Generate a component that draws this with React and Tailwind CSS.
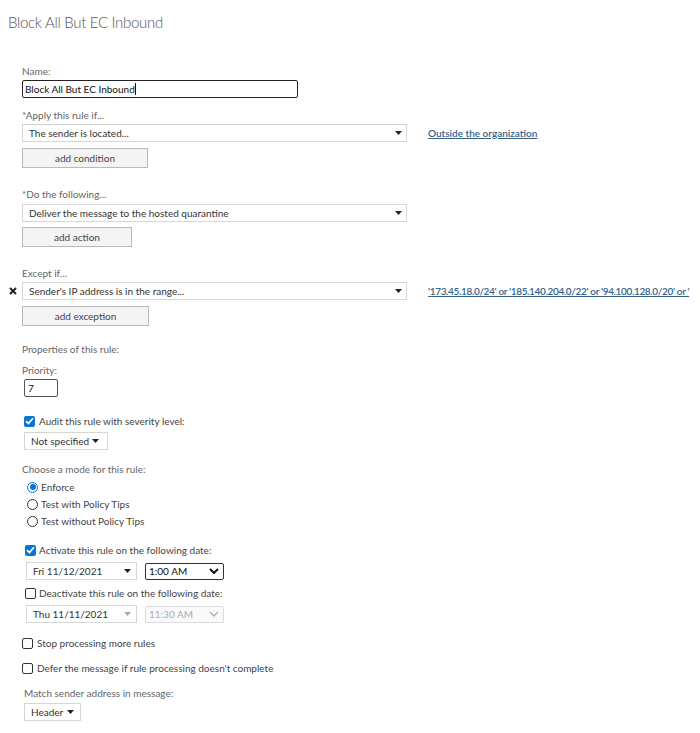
import React from "react";

const Tri = ({ color = "#222" }) => (
  <svg width="7" height="4" viewBox="0 0 7 4" className="shrink-0"><path d="M0 0H7L3.5 4Z" fill={color} /></svg>
);
const Chev = ({ color = "#111", w = 2 }) => (
  <svg width="10" height="6" viewBox="0 0 10 6" className="shrink-0"><path d="M1 1L5 5L9 1" fill="none" stroke={color} strokeWidth={w} /></svg>
);

const Label = ({ children, cls = "" }) => (
  <div className={"h-[14px] leading-[14px] text-[#666] whitespace-nowrap " + cls}>{children}</div>
);

const Check = ({ checked }) =>
  checked ? (
    <span className="w-[11px] h-[11px] rounded-[2px] bg-[#0a74d6] flex items-center justify-center shrink-0">
      <svg width="9" height="8" viewBox="0 0 9 8"><path d="M1 4.2L3.4 6.5L8 1.3" fill="none" stroke="#fff" strokeWidth="1.7" /></svg>
    </span>
  ) : (
    <span className="w-[11px] h-[11px] rounded-[2px] border border-[#333] bg-white shrink-0" />
  );

const Radio = ({ checked }) =>
  checked ? (
    <span className="w-[11px] h-[11px] rounded-full border-[1.5px] border-[#0a74d6] flex items-center justify-center shrink-0">
      <span className="w-[6px] h-[6px] rounded-full bg-[#0a74d6]" />
    </span>
  ) : (
    <span className="w-[11px] h-[11px] rounded-full border border-[#333] bg-white shrink-0" />
  );

export default function App() {
  return (
    <div className="w-[700px] h-[733px] bg-white overflow-hidden font-['Lato',sans-serif] text-[10px] text-[#333] whitespace-nowrap">
      <div className="pt-[12px] pl-[8px] h-[32px] leading-[20px] text-[15px] tracking-[-0.3px] font-light text-[#555]">
        Block All But EC Inbound
      </div>

      <div className="pl-[22px]">
        <Label cls="mt-[32px]">Name:</Label>
        <div className="mt-[2px] w-[276px] h-[18px] border-[1.5px] border-[#222] rounded-[2px] flex items-center pl-[2px] text-[#111]">
          Block All But EC Inbound<span className="w-px h-[12px] bg-[#111]" />
        </div>

        <Label cls="mt-[10px]">*Apply this rule if...</Label>
        <div className="mt-[2px] flex items-center">
          <div className="w-[385px] shrink-0 h-[18px] border border-[#d6d6d6] border-t-[#cfcfcf] bg-white flex items-center justify-between pl-[6px] pr-[4px]">
            <span>The sender is located...</span>
            <Tri />
          </div>
          <a className="ml-[21px] underline text-[#35638a] font-semibold">Outside the organization</a>
        </div>
        <div className="mt-[6px] w-[126px] h-[20px] border border-[#b9b9b9] bg-[#f4f4f4] flex items-center justify-center text-[#444]">
          add condition
        </div>

        <Label cls="mt-[19px]">*Do the following...</Label>
        <div className="mt-[3px] w-[385px] h-[18px] border border-[#d6d6d6] bg-white flex items-center justify-between pl-[6px] pr-[4px]">
          <span>Deliver the message to the hosted quarantine</span>
          <Tri />
        </div>
        <div className="mt-[5px] w-[110px] h-[20px] border border-[#b9b9b9] bg-[#f4f4f4] flex items-center justify-center text-[#444]">
          add action
        </div>

        <Label cls="mt-[19px]">Except if...</Label>
        <div className="mt-[2px] flex items-center -ml-[13px]">
          <span className="w-[13px] shrink-0 flex items-center">
            <svg width="8" height="8" viewBox="0 0 8 8"><path d="M1 1L7 7M7 1L1 7" stroke="#222" strokeWidth="2" /></svg>
          </span>
          <div className="w-[385px] shrink-0 h-[18px] border border-[#d6d6d6] bg-white flex items-center justify-between pl-[6px] pr-[4px]">
            <span>Sender's IP address is in the range...</span>
            <Tri />
          </div>
          <a className="ml-[21px] shrink-0 underline text-[#35638a] font-semibold tracking-[-0.35px]">
            '173.45.18.0/24' or '185.140.204.0/22' or '94.100.128.0/20' or '
          </a>
        </div>
        <div className="mt-[6px] w-[127px] h-[20px] border border-[#b9b9b9] bg-[#f4f4f4] flex items-center justify-center text-[#444]">
          add exception
        </div>

        <Label cls="mt-[16px]">Properties of this rule:</Label>
        <Label cls="mt-[7px]">Priority:</Label>
        <div className="mt-[2px] ml-[2px] w-[34px] h-[18px] border border-[#555] rounded-[2px] flex items-center pl-[3px] text-[#111]">
          7
        </div>

        <div className="mt-[17px] ml-[2px] h-[14px] flex items-center gap-[4px] text-[#444]">
          <Check checked />
          <span>Audit this rule with severity level:</span>
        </div>
        <div className="mt-[4px] ml-[2px] w-[84px] h-[18px] border border-[#d6d6d6] bg-white flex items-center justify-between pl-[6px] pr-[8px]">
          <span>Not specified</span>
          <Tri />
        </div>

        <Label cls="mt-[12px]">Choose a mode for this rule:</Label>
        <div className="mt-[4px] ml-[5px] h-[14px] flex items-center gap-[3px] text-[#444]">
          <Radio checked />
          <span>Enforce</span>
        </div>
        <div className="mt-[3px] ml-[5px] h-[14px] flex items-center gap-[3px] text-[#444]">
          <Radio />
          <span>Test with Policy Tips</span>
        </div>
        <div className="mt-[3px] ml-[5px] h-[14px] flex items-center gap-[3px] text-[#444]">
          <Radio />
          <span>Test without Policy Tips</span>
        </div>

        <div className="mt-[15px] ml-[3px] h-[14px] flex items-center gap-[3px] text-[#444]">
          <Check checked />
          <span>Activate this rule on the following date:</span>
        </div>
        <div className="mt-[5px] ml-[4px] flex items-center gap-[8px]">
          <div className="w-[111px] h-[18px] border border-[#d6d6d6] bg-white flex items-center justify-between pl-[6px] pr-[5px]">
            <span>Fri 11/12/2021</span>
            <Tri />
          </div>
          <div className="w-[79px] h-[17px] border border-[#333] rounded-[2px] bg-white flex items-center justify-between pl-[3px] pr-[4px] text-[#111]">
            <span>1:00 AM</span>
            <Chev />
          </div>
        </div>

        <div className="mt-[6px] ml-[3px] h-[14px] flex items-center gap-[3px] text-[#444]">
          <Check />
          <span>Deactivate this rule on the following date:</span>
        </div>
        <div className="mt-[5px] ml-[4px] flex items-center gap-[8px]">
          <div className="w-[111px] h-[18px] border border-[#d6d6d6] bg-white flex items-center justify-between pl-[6px] pr-[5px]">
            <span>Thu 11/11/2021</span>
            <Tri color="#aaa" />
          </div>
          <div className="w-[79px] h-[17px] border border-[#dcdcdc] rounded-[2px] bg-[#fafafa] flex items-center justify-between pl-[3px] pr-[4px] text-[#aaa]">
            <span>11:30 AM</span>
            <Chev color="#b0b0b0" w={1.4} />
          </div>
        </div>

        <div className="mt-[13px] h-[14px] flex items-center gap-[4px] text-[#444]">
          <Check />
          <span>Stop processing more rules</span>
        </div>
        <div className="mt-[11px] h-[14px] flex items-center gap-[4px] text-[#444]">
          <Check />
          <span>Defer the message if rule processing doesn't complete</span>
        </div>

        <Label cls="mt-[11px] ml-[2px]">Match sender address in message:</Label>
        <div className="mt-[3px] ml-[2px] w-[57px] h-[18px] border border-[#d6d6d6] bg-white flex items-center justify-between pl-[6px] pr-[6px]">
          <span>Header</span>
          <Tri />
        </div>
      </div>
    </div>
  );
}
